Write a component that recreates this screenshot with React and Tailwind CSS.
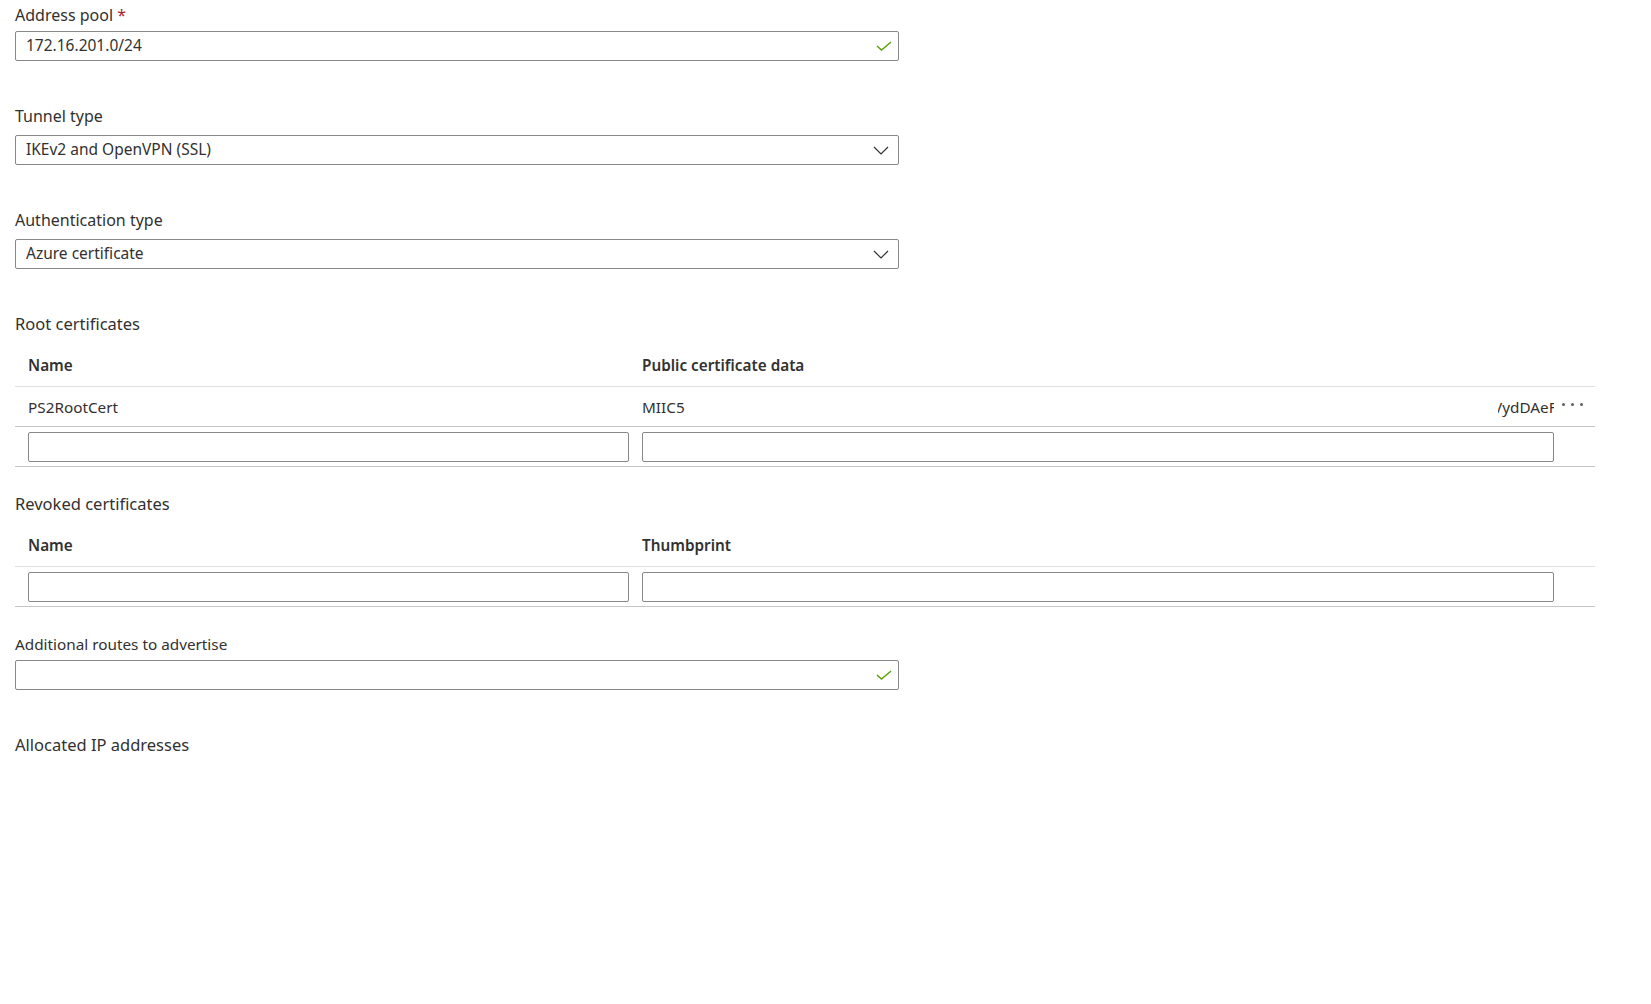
const font = { fontFamily: '"Segoe UI", "Noto Sans", sans-serif' }

function Check() {
  return (
    <svg width="16" height="10" viewBox="0 0 16 10" className="shrink-0">
      <polyline points="1,5 5.5,9 15,1" fill="none" stroke="#57a300" strokeWidth="1.4" />
    </svg>
  )
}

function Chevron() {
  return (
    <svg width="16" height="9" viewBox="0 0 16 9" className="shrink-0 mr-[3px]">
      <polyline points="1,1 8,8 15,1" fill="none" stroke="#323130" strokeWidth="1.2" />
    </svg>
  )
}

function Field({ value, icon }) {
  return (
    <div className="w-[884px] h-[30px] border border-[#8a8886] rounded-[2px] flex items-center pl-[10px] pr-[6px] text-[15.5px] text-[#323130]">
      <span className="flex-1">{value}</span>
      {icon === 'check' && <Check />}
      {icon === 'chevron' && <Chevron />}
    </div>
  )
}

function Box({ w }) {
  return <div className={`h-[30px] border border-[#8a8886] rounded-[2px] ${w}`} />
}

function Dots() {
  return (
    <span className="ml-[8px] flex gap-[6px] items-center -mt-[4px]">
      <span className="w-[3px] h-[3px] rounded-full bg-[#605e5c]" />
      <span className="w-[3px] h-[3px] rounded-full bg-[#605e5c]" />
      <span className="w-[3px] h-[3px] rounded-full bg-[#605e5c]" />
    </span>
  )
}

export default function App() {
  return (
    <div style={font} className="min-h-screen bg-white pl-[15px] pt-[5px] text-[#323130]">

      {/* ── Address pool ── */}
      <div className="h-[20px] leading-[20px] text-[16px] mb-[6px]">
        Address pool <span className="text-[#a4262c]">*</span>
      </div>
      <Field value="172.16.201.0/24" icon="check" />

      {/* ── Tunnel type ── */}
      <div className="mt-[45px] h-[20px] leading-[20px] text-[16px] mb-[9px]">Tunnel type</div>
      <Field value="IKEv2 and OpenVPN (SSL)" icon="chevron" />

      {/* ── Auth type ── */}
      <div className="mt-[45px] h-[20px] leading-[20px] text-[16px] mb-[9px]">Authentication type</div>
      <Field value="Azure certificate" icon="chevron" />

      {/* ── Root certificates ── */}
      <div className="mt-[45px] h-[20px] leading-[20px] text-[16.5px] mb-[11px]">Root certificates</div>
      <div className="w-[1580px] text-[15.3px]">
        <div className="h-[42px] flex items-center pl-[13px] border-b border-[#e1dfdd] font-semibold">
          <span className="w-[614px]">Name</span>
          <span>Public certificate data</span>
        </div>
        <div className="h-[40px] flex items-center pl-[13px] border-b border-[#c8c6c4]">
          <span className="w-[614px] pt-[1px]">PS2RootCert</span>
          <div className="w-[912px] flex items-center justify-between pt-[1px]">
            <span>MIIC5</span>
            <span className="w-[56px] overflow-hidden whitespace-nowrap">
              <span className="inline-block ml-[-5px]">VydDAeFg</span>
            </span>
          </div>
          <Dots />
        </div>
        <div className="h-[40px] flex items-center gap-[13px] pl-[13px] border-b border-[#c8c6c4]">
          <Box w="w-[601px]" />
          <Box w="w-[912px]" />
        </div>
      </div>

      {/* ── Revoked certificates ── */}
      <div className="mt-[27px] h-[20px] leading-[20px] text-[16.5px] mb-[10px]">Revoked certificates</div>
      <div className="w-[1580px] text-[15.3px]">
        <div className="h-[43px] flex items-center pl-[13px] border-b border-[#e1dfdd] font-semibold">
          <span className="w-[614px]">Name</span>
          <span>Thumbprint</span>
        </div>
        <div className="h-[40px] flex items-center gap-[13px] pl-[13px] border-b border-[#c8c6c4]">
          <Box w="w-[601px]" />
          <Box w="w-[912px]" />
        </div>
      </div>

      {/* ── Additional routes ── */}
      <div className="mt-[27px] h-[20px] leading-[20px] text-[15.3px] mb-[6px]">Additional routes to advertise</div>
      <Field value="" icon="check" />

      <div className="mt-[45px] h-[20px] leading-[20px] text-[16.5px]">Allocated IP addresses</div>
    </div>
  )
}
